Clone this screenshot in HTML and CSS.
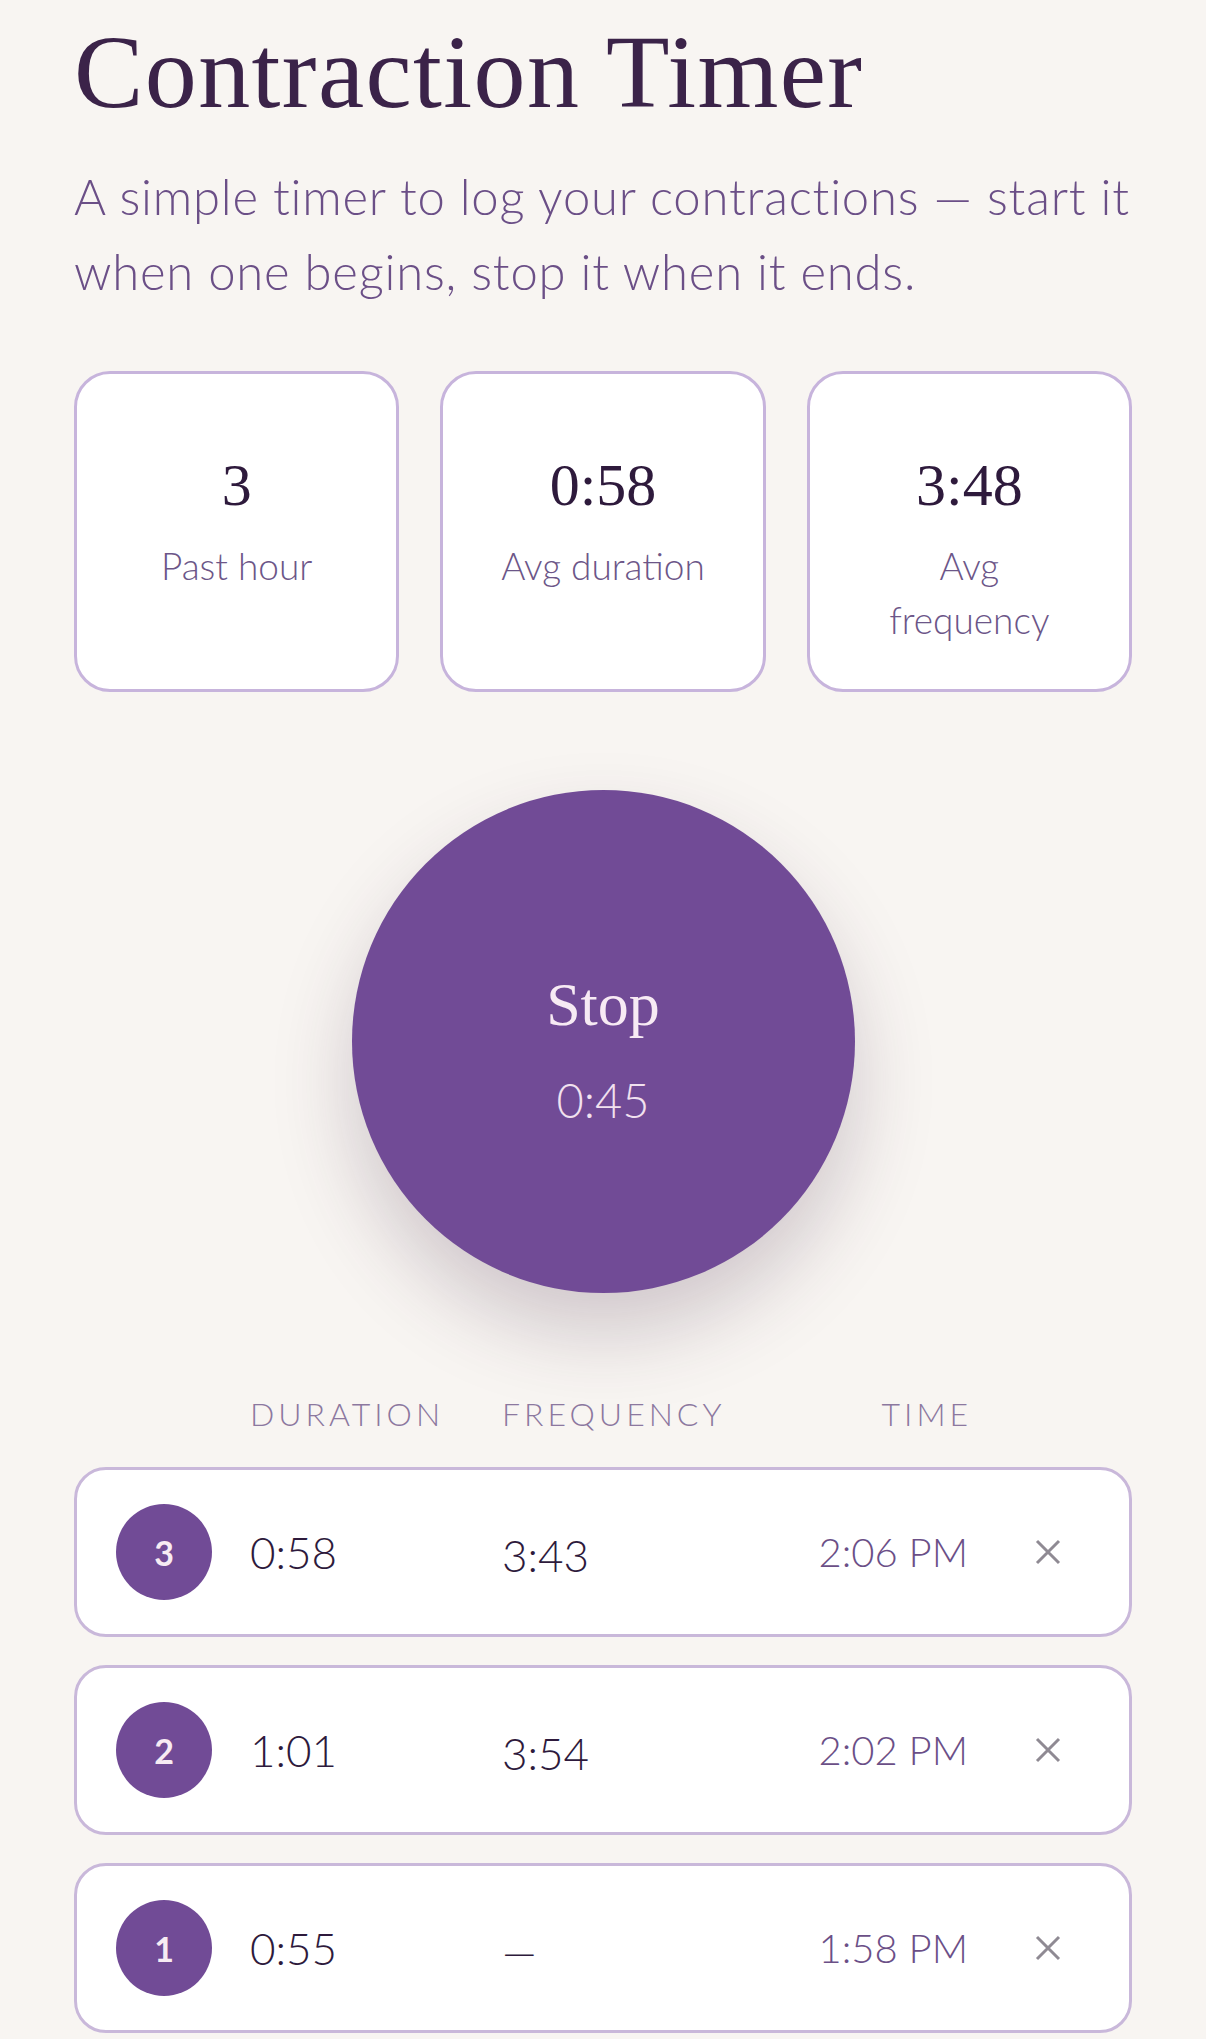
FILE: index.html
```html
<!DOCTYPE html>
<html>
<head>
	<title>Contraction Timer</title>
	<link rel="stylesheet" href="styles.css">
</head>
<body>
	<div class="page">
		<h1 class="title">Contraction Timer</h1>
		<p class="intro">A simple timer to log your contractions — start it when one begins, stop it when it ends.</p>

		<div class="stats">
			<div class="stat">
				<div class="stat-value">3</div>
				<div class="stat-label">Past hour</div>
			</div>
			<div class="stat">
				<div class="stat-value">0:58</div>
				<div class="stat-label">Avg duration</div>
			</div>
			<div class="stat">
				<div class="stat-value">3:48</div>
				<div class="stat-label">Avg frequency</div>
			</div>
		</div>

		<div class="timer-wrap">
			<button class="timer">
				<span class="timer-action">Stop</span>
				<span class="timer-time">0:45</span>
			</button>
		</div>

		<div class="log-head">
			<span></span>
			<span>Duration</span>
			<span>Frequency</span>
			<span class="col-time">Time</span>
			<span></span>
		</div>

		<div class="log">
			<div class="entry">
				<span class="badge">3</span>
				<span class="duration">0:58</span>
				<span class="frequency">3:43</span>
				<span class="col-time">2:06 PM</span>
				<button class="remove"><svg width="28" height="28" viewBox="0 0 28 28"><path d="M3 3 L25 25 M25 3 L3 25" stroke="#8f8a93" stroke-width="3" fill="none"/></svg></button>
			</div>
			<div class="entry">
				<span class="badge">2</span>
				<span class="duration">1:01</span>
				<span class="frequency">3:54</span>
				<span class="col-time">2:02 PM</span>
				<button class="remove"><svg width="28" height="28" viewBox="0 0 28 28"><path d="M3 3 L25 25 M25 3 L3 25" stroke="#8f8a93" stroke-width="3" fill="none"/></svg></button>
			</div>
			<div class="entry">
				<span class="badge">1</span>
				<span class="duration">0:55</span>
				<span class="frequency">—</span>
				<span class="col-time">1:58 PM</span>
				<button class="remove"><svg width="28" height="28" viewBox="0 0 28 28"><path d="M3 3 L25 25 M25 3 L3 25" stroke="#8f8a93" stroke-width="3" fill="none"/></svg></button>
			</div>
		</div>
	</div>
</body>
</html>
```
FILE: styles.css
```css
body {
	margin: 0;
	padding: 0;
	background: #f8f5f2;
	font-family: Lato, "Open Sans", sans-serif;
	color: #2e1a3c;
}

.page {
	padding: 15px 74px 0;
}

.title {
	margin: 0;
	font-family: "Liberation Serif", "DejaVu Serif", serif;
	font-weight: normal;
	font-size: 104px;
	line-height: 114px;
	letter-spacing: 1.4px;
	color: #3b2349;
}

.intro {
	margin: 30px 0 0;
	font-size: 49px;
	font-weight: 300;
	line-height: 75px;
	letter-spacing: 0.8px;
	color: #6b4f87;
}

.stats {
	margin-top: 62px;
	display: grid;
	grid-template-columns: 1fr 1fr 1fr;
	gap: 41px;
}

.stat {
	background: #fff;
	border: 3px solid #c7b4dc;
	border-radius: 36px;
	padding: 82px 46px 42px;
	text-align: center;
}

.stat-value {
	font-family: "Liberation Serif", serif;
	font-size: 60px;
	line-height: 58px;
	color: #2e1a3c;
}

.stat-label {
	margin-top: 25px;
	font-size: 37px;
	font-weight: 300;
	line-height: 54px;
	color: #6c5688;
}

.timer-wrap {
	margin-top: 98px;
	display: flex;
	justify-content: center;
}

.timer {
	width: 503px;
	height: 503px;
	border: none;
	border-radius: 50%;
	background: #714b96;
	box-shadow: 0 40px 80px rgba(70, 40, 70, 0.22);
	display: flex;
	flex-direction: column;
	align-items: center;
	justify-content: center;
	padding: 11px 0 0;
	gap: 43px;
	cursor: pointer;
}

.timer-action {
	font-family: "Liberation Serif", serif;
	font-size: 62px;
	line-height: 62px;
	color: #f7eaf4;
}

.timer-time {
	font-family: Lato, sans-serif;
	font-size: 47px;
	font-weight: 300;
	line-height: 44px;
	color: #f1e1ef;
}

.log-head,
.entry {
	display: grid;
	grid-template-columns: 96px 214px 1fr 180px 84px;
	column-gap: 38px;
	align-items: center;
}

.log-head {
	margin-top: 101px;
	padding: 0 42px;
	font-size: 32px;
	font-weight: 300;
	line-height: 40px;
	letter-spacing: 4px;
	text-transform: uppercase;
	color: #8c789f;
}

.log-head .col-time {
	margin-right: -4px;
}

.log {
	margin-top: 33px;
	display: flex;
	flex-direction: column;
	gap: 28px;
}

.entry {
	background: #fff;
	border: 3px solid #c9b8da;
	border-radius: 32px;
	padding: 34px 39px;
	font-size: 44px;
	font-weight: 300;
}

.badge {
	width: 96px;
	height: 96px;
	border-radius: 50%;
	background: #714b96;
	color: #f7ebf3;
	font-size: 34px;
	font-weight: 700;
	display: flex;
	align-items: center;
	justify-content: center;
}

.duration,
.frequency {
	color: #2e1a3c;
}

.frequency {
	padding-top: 6px;
}

.col-time {
	text-align: right;
}

.entry .col-time {
	font-size: 40px;
	color: #6b4f87;
}

.remove {
	border: none;
	background: none;
	padding: 0;
	display: flex;
	justify-content: center;
	cursor: pointer;
}
```
